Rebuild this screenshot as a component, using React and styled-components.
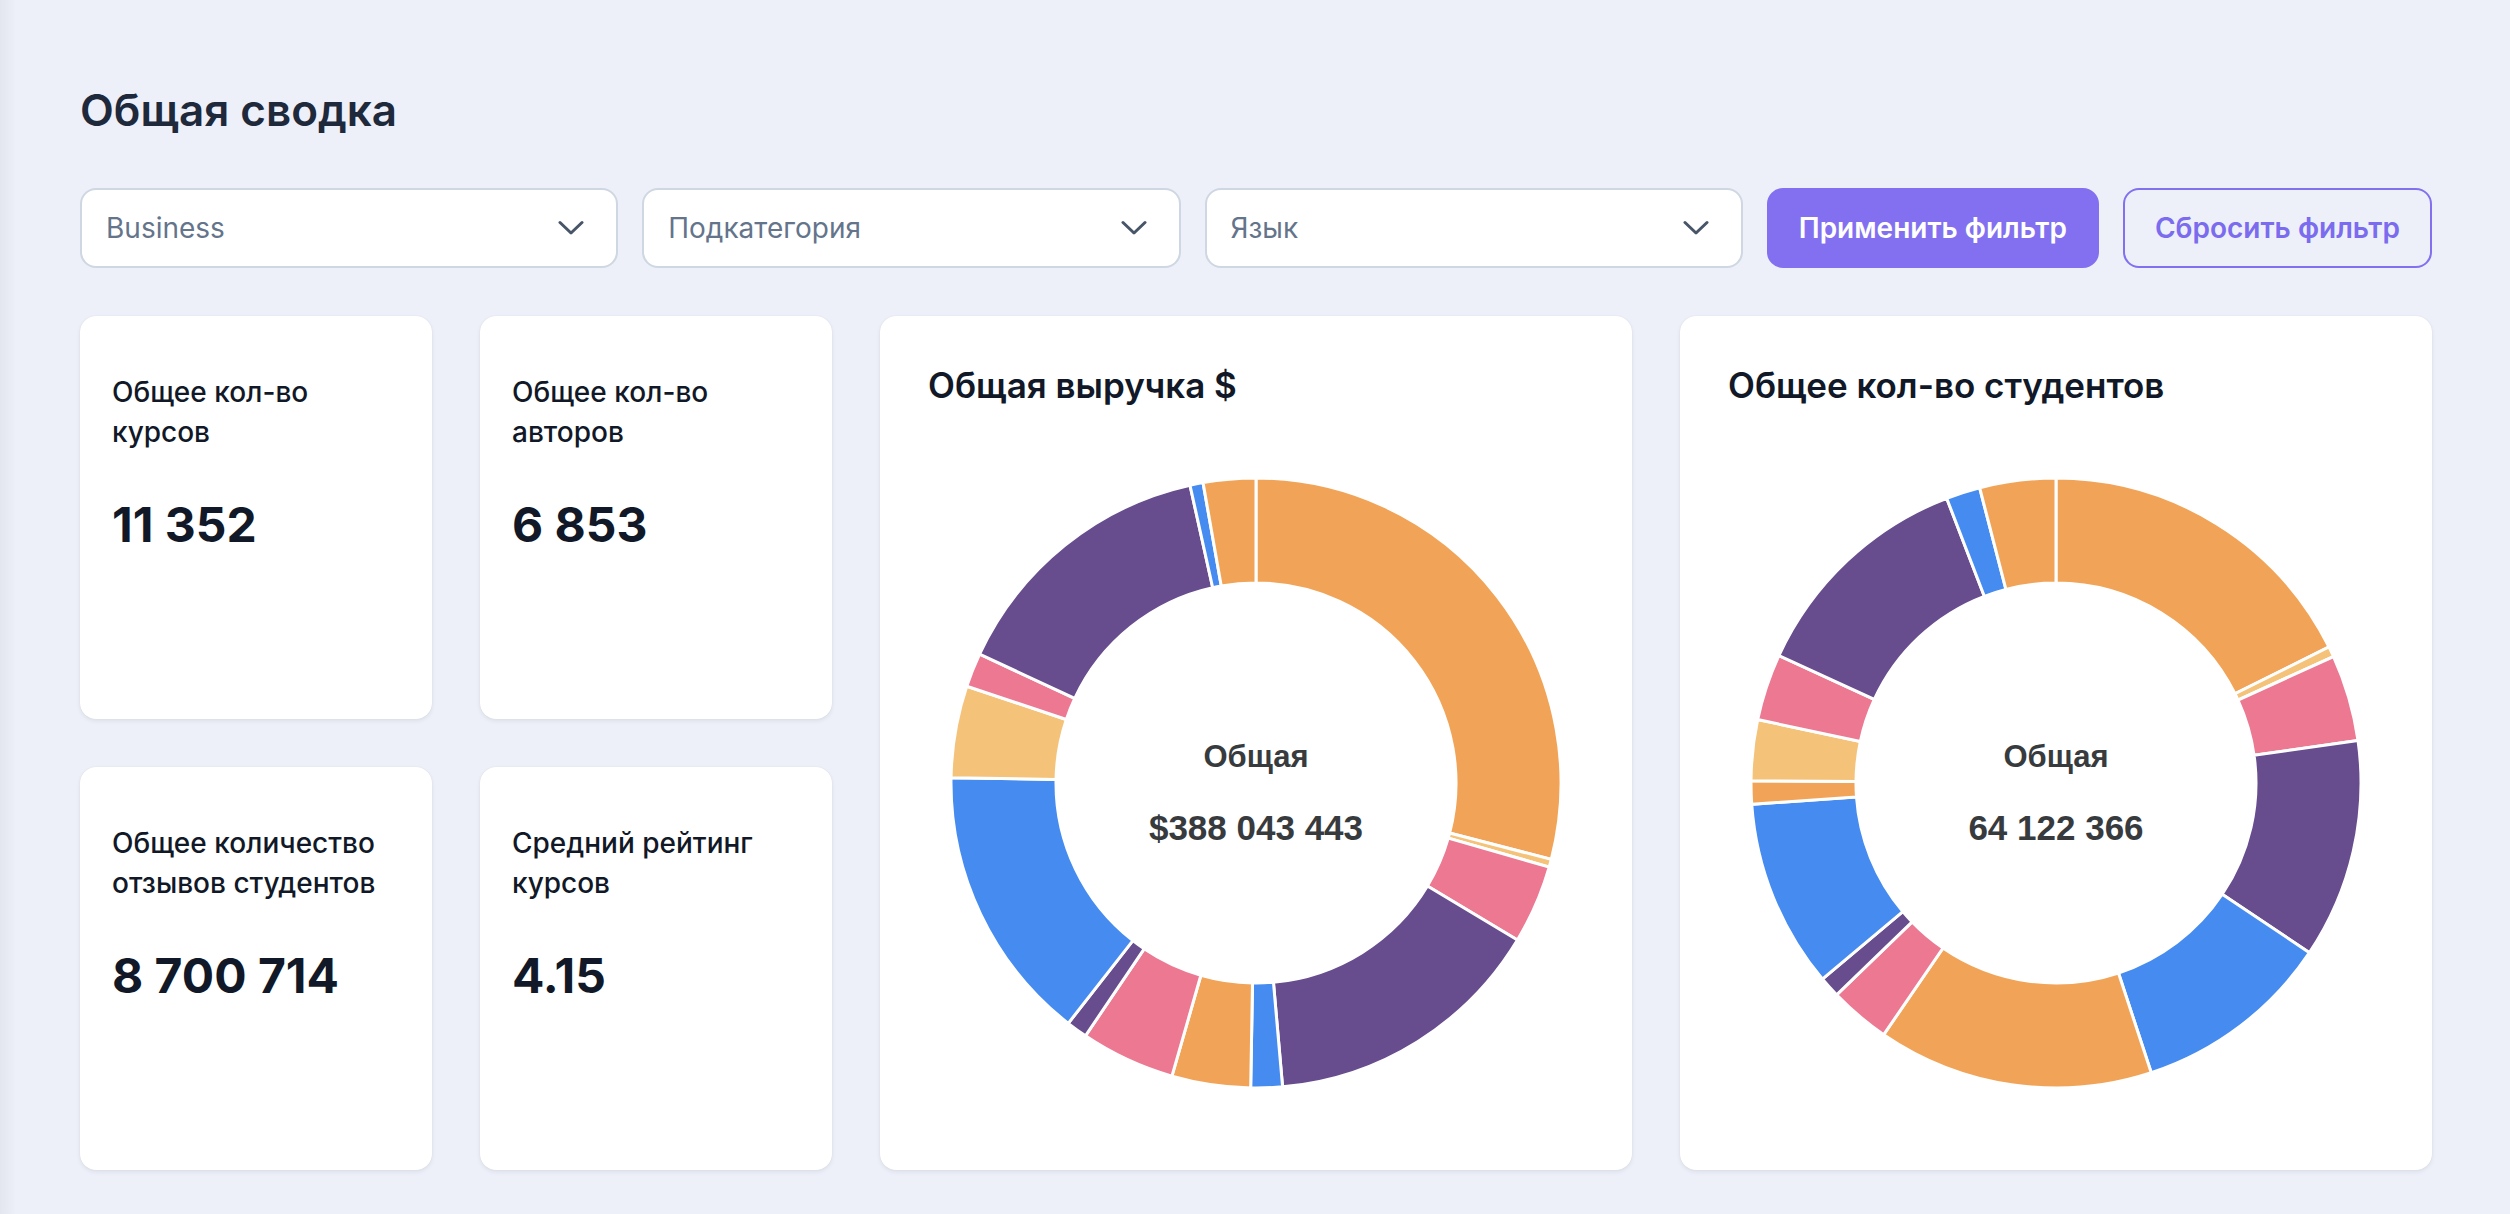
import React from 'react'
import styled, { createGlobalStyle } from 'styled-components'

const GlobalStyle = createGlobalStyle`
  * {
    box-sizing: border-box;
  }
  body {
    margin: 0;
    background: #edf0f8;
    font-family: Inter, "Noto Sans", sans-serif;
    color: #111827;
  }
`

const COLORS = {
  orange: '#f1a457',
  light: '#f5c27a',
  pink: '#ec7891',
  purple: '#674c8e',
  blue: '#458bf0',
}

const revenue = [
  [0, 104.5, 'orange'],
  [104.5, 106, 'light'],
  [106, 121, 'pink'],
  [121, 175, 'purple'],
  [175, 181, 'blue'],
  [181, 196, 'orange'],
  [196, 214, 'pink'],
  [214, 218, 'purple'],
  [218, 271, 'blue'],
  [271, 288.5, 'light'],
  [288.5, 295, 'pink'],
  [295, 347.5, 'purple'],
  [347.5, 350, 'blue'],
  [350, 360, 'orange'],
]

const students = [
  [0, 63.5, 'orange'],
  [63.5, 65.5, 'light'],
  [65.5, 82, 'pink'],
  [82, 123.8, 'purple'],
  [123.8, 161.8, 'blue'],
  [161.8, 214.4, 'orange'],
  [214.4, 226, 'pink'],
  [226, 230, 'purple'],
  [230, 266, 'blue'],
  [266, 270.4, 'orange'],
  [270.4, 282, 'light'],
  [282, 294.7, 'pink'],
  [294.7, 339, 'purple'],
  [339, 345.5, 'blue'],
  [345.5, 360, 'orange'],
]

const Page = styled.main`
  min-height: 1214px;
  padding: 84px 78px 40px 80px;
  background: linear-gradient(90deg, #e3e6ee 0px, #e9ecf4 10px, #edf0f8 16px);
`

const Title = styled.h1`
  margin: 0 0 51px;
  font-size: 44px;
  line-height: 1.2;
  font-weight: 600;
  color: #1e293b;
`

const Filters = styled.div`
  display: flex;
  gap: 24px;
  height: 80px;
`

const Select = styled.div`
  flex: 1;
  display: flex;
  align-items: center;
  justify-content: space-between;
  padding: 0 32px 0 24px;
  background: #fff;
  border: 2px solid #cfd7e3;
  border-radius: 16px;
  font-size: 28px;
  color: #64748b;
`

const Button = styled.button`
  height: 80px;
  padding: 0 30px;
  border-radius: 16px;
  border: 2px solid #8270f0;
  background: ${(p) => (p.$outline ? 'transparent' : '#8270f0')};
  color: ${(p) => (p.$outline ? '#7b6bef' : '#fff')};
  font-family: Inter, "Noto Sans", sans-serif;
  font-size: 28px;
  font-weight: 600;
  white-space: nowrap;
`

const Grid = styled.section`
  display: grid;
  grid-template-columns: repeat(6, 1fr);
  grid-auto-rows: 403px;
  gap: 48px;
  margin-top: 48px;
`

const Card = styled.div`
  background: #fff;
  border-radius: 16px;
  box-shadow: 0 2px 4px rgba(30, 41, 59, 0.08), 0 0 1px rgba(30, 41, 59, 0.12);
`

const StatCard = styled(Card)`
  padding: 56px 32px;
`

const StatLabel = styled.div`
  font-size: 28px;
  line-height: 40px;
  font-weight: 500;
  color: #111827;
`

const StatValue = styled.div`
  margin-top: 44px;
  font-size: 48px;
  line-height: 1.2;
  font-weight: 700;
  color: #111827;
`

const ChartCard = styled(Card)`
  grid-column: span 2;
  grid-row: span 2;
  padding: 48px;
`

const ChartTitle = styled.h2`
  margin: 0 0 71px;
  font-size: 35px;
  line-height: 1.2;
  font-weight: 600;
  color: #111827;
`

const ChartBox = styled.div`
  display: flex;
  justify-content: center;
`

const SIZE = 612
const C = SIZE / 2
const R = 305
const r = 200

const polar = (rad, deg) => {
  const a = ((deg - 90) * Math.PI) / 180
  return [C + rad * Math.cos(a), C + rad * Math.sin(a)]
}

const slice = (a0, a1) => {
  const [x0, y0] = polar(R, a0)
  const [x1, y1] = polar(R, a1)
  const [x2, y2] = polar(r, a1)
  const [x3, y3] = polar(r, a0)
  const large = a1 - a0 > 180 ? 1 : 0
  return `M${x0} ${y0} A${R} ${R} 0 ${large} 1 ${x1} ${y1} L${x2} ${y2} A${r} ${r} 0 ${large} 0 ${x3} ${y3} Z`
}

function Donut({ data, total }) {
  return (
    <svg width={SIZE} height={SIZE} viewBox={`0 0 ${SIZE} ${SIZE}`}>
      {data.map(([a0, a1, c], i) => (
        <path key={i} d={slice(a0, a1)} fill={COLORS[c]} stroke="#fff" strokeWidth="3" />
      ))}
      <g fontFamily='"Liberation Sans", Arial, sans-serif' fontWeight="700" fill="#383b3e" textAnchor="middle">
        <text x={C} y={290} fontSize="31">Общая</text>
        <text x={C} y={363} fontSize="35">{total}</text>
      </g>
    </svg>
  )
}

function Chevron() {
  return (
    <svg width="26" height="16" viewBox="0 0 26 16">
      <polyline points="2,2.5 13,13 24,2.5" fill="none" stroke="#475569" strokeWidth="3" strokeLinecap="round" strokeLinejoin="round" />
    </svg>
  )
}

const stats = [
  ['Общее кол-во курсов', '11 352'],
  ['Общее кол-во авторов', '6 853'],
]

const stats2 = [
  ['Общее количество отзывов студентов', '8 700 714'],
  ['Средний рейтинг курсов', '4.15'],
]

export default function App() {
  return (
    <>
      <GlobalStyle />
      <Page>
        <Title>Общая сводка</Title>
        <Filters>
          <Select>
            Business
            <Chevron />
          </Select>
          <Select>
            Подкатегория
            <Chevron />
          </Select>
          <Select>
            Язык
            <Chevron />
          </Select>
          <Button>Применить фильтр</Button>
          <Button $outline>Сбросить фильтр</Button>
        </Filters>
        <Grid>
          {stats.map(([label, value]) => (
            <StatCard key={label}>
              <StatLabel>{label}</StatLabel>
              <StatValue>{value}</StatValue>
            </StatCard>
          ))}
          <ChartCard>
            <ChartTitle>Общая выручка $</ChartTitle>
            <ChartBox>
              <Donut data={revenue} total="$388 043 443" />
            </ChartBox>
          </ChartCard>
          <ChartCard>
            <ChartTitle>Общее кол-во студентов</ChartTitle>
            <ChartBox>
              <Donut data={students} total="64 122 366" />
            </ChartBox>
          </ChartCard>
          {stats2.map(([label, value]) => (
            <StatCard key={label}>
              <StatLabel>{label}</StatLabel>
              <StatValue>{value}</StatValue>
            </StatCard>
          ))}
        </Grid>
      </Page>
    </>
  )
}
